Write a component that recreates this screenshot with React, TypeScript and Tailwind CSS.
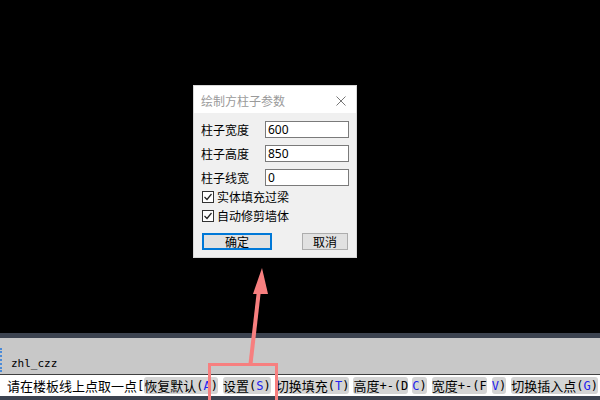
import type { ReactNode } from "react";

const cjk = { fontFamily: '"Noto Sans CJK SC", "Noto Sans", sans-serif' };
const mono = { fontFamily: '"DejaVu Sans Mono", "Noto Sans CJK SC", monospace' };

// latin bits in the command line are a 12px monospace
const L = ({ children, blue }: { children: ReactNode; blue?: boolean }) => (
  <span className={`text-[12px] ${blue ? "text-[#2222ee]" : "text-black"}`} style={mono}>
    {children}
  </span>
);

const Chip = ({ ml, children }: { ml: string; children: ReactNode }) => (
  <span className={`${ml} flex h-[17px] items-center rounded-[3px] bg-[#d4d4d4]`}>{children}</span>
);

const Field = ({ label, value }: { label: string; value: string }) => (
  <div className="flex h-[17px] items-center">
    <span className="w-[64px] text-[12px] leading-none text-black" style={cjk}>
      {label}
    </span>
    <div
      className="flex h-[17px] w-[84px] items-center border border-[#7a7a7a] bg-white pl-[2px] text-[12px] leading-none text-black"
      style={{ fontFamily: '"Noto Sans", sans-serif' }}
    >
      {value}
    </div>
  </div>
);

const Check = ({ label }: { label: string }) => (
  <div className="flex h-[14px] items-center">
    <div className="ml-px flex h-[12px] w-[12px] items-center justify-center border border-[#333] bg-white">
      <svg width="10" height="10" viewBox="0 0 10 10">
        <path d="M1.5 5 L4 7.5 L8.5 2" fill="none" stroke="#222" strokeWidth="1.2" />
      </svg>
    </div>
    <span className="ml-[3px] text-[12px] leading-none text-black" style={cjk}>
      {label}
    </span>
  </div>
);

export default function App() {
  return (
    <div className="relative flex h-[400px] w-[600px] flex-col overflow-hidden bg-black">
      {/* drawing canvas */}
      <div className="h-[333px] bg-black" />
      <div className="h-[5px] bg-[#3c4350]" />
      <div className="relative flex h-[36px] items-end bg-[#c8c8c8] pb-[2px] pl-[11px]">
        <div className="absolute left-0 top-[10px] h-[24px] border-l-2 border-dotted border-[#4a8ad8]" />
        <span className="text-[11px] text-black" style={mono}>
          zhl_czz
        </span>
      </div>
      <div className="h-px bg-[#404040]" />
      <div className="flex h-[21px] items-center bg-white pl-[7px] text-[13px] text-black" style={cjk}>
        <span>请在楼板线上点取一点</span>
        <L>[</L>
        <Chip ml="ml-0">
          恢复默认<L>(</L>
          <L blue>A</L>
          <L>)</L>
        </Chip>
        <Chip ml="ml-[5px]">
          设置<L>(</L>
          <L blue>S</L>
          <L>)</L>
        </Chip>
        <Chip ml="ml-[5px]">
          切换填充<L>(</L>
          <L blue>T</L>
          <L>)</L>
        </Chip>
        <Chip ml="ml-[4px]">
          高度<L>+-(D</L>
        </Chip>
        <Chip ml="ml-[4px]">
          <L blue>C</L>
          <L>)</L>
        </Chip>
        <Chip ml="ml-[5px]">
          宽度<L>+-(F</L>
        </Chip>
        <Chip ml="ml-[5px]">
          <L blue>V</L>
          <L>)</L>
        </Chip>
        <Chip ml="ml-[5px]">
          切换插入点<L>(</L>
          <L blue>G</L>
          <L>)</L>
        </Chip>
      </div>
      <div className="h-[4px] bg-[#3c4350]" />

      {/* dialog window */}
      <div className="absolute left-[193px] top-[85px] flex h-[173px] w-[164px] flex-col border border-[#d8d8d8] bg-[#f0f0f0]">
        <div className="flex h-[27px] items-center justify-between bg-white pl-[7px] pr-[10px] pt-[2px]">
          <span className="text-[12px] leading-none text-[#9a9a9a]" style={cjk}>
            绘制方柱子参数
          </span>
          <svg width="10" height="10" viewBox="0 0 10 10">
            <path d="M0.5 0.5 L9.5 9.5 M9.5 0.5 L0.5 9.5" stroke="#777" strokeWidth="1" />
          </svg>
        </div>
        <div className="flex flex-col pl-[7px] pt-[8px]">
          <div className="flex flex-col gap-[7px]">
            <Field label="柱子宽度" value="600" />
            <Field label="柱子高度" value="850" />
            <Field label="柱子线宽" value="0" />
          </div>
          <div className="mt-[4px] flex flex-col gap-[5px]">
            <Check label="实体填充过梁" />
            <Check label="自动修剪墙体" />
          </div>
          <div className="mt-[10px] flex items-center">
            <div
              className="ml-[1px] flex h-[17px] w-[70px] items-center justify-center border-2 border-[#0078d7] bg-[#e1e1e1] text-[12px] leading-none text-black"
              style={cjk}
            >
              确定
            </div>
            <div
              className="ml-[30px] flex h-[17px] w-[46px] items-center justify-center border border-[#adadad] bg-[#e1e1e1] text-[12px] leading-none text-black"
              style={cjk}
            >
              取消
            </div>
          </div>
        </div>
      </div>

      {/* red annotation */}
      <svg className="absolute left-0 top-0" width="600" height="400" viewBox="0 0 600 400">
        <line x1="250.5" y1="364" x2="259" y2="290" stroke="#f77f7f" strokeWidth="4" />
        <polygon points="262,268 253,294 268,294" fill="#f77f7f" />
      </svg>
      <div className="absolute left-[208px] top-[363px] h-[45px] w-[70px] border-[3px] border-[#f77f7f]" />
    </div>
  );
}
